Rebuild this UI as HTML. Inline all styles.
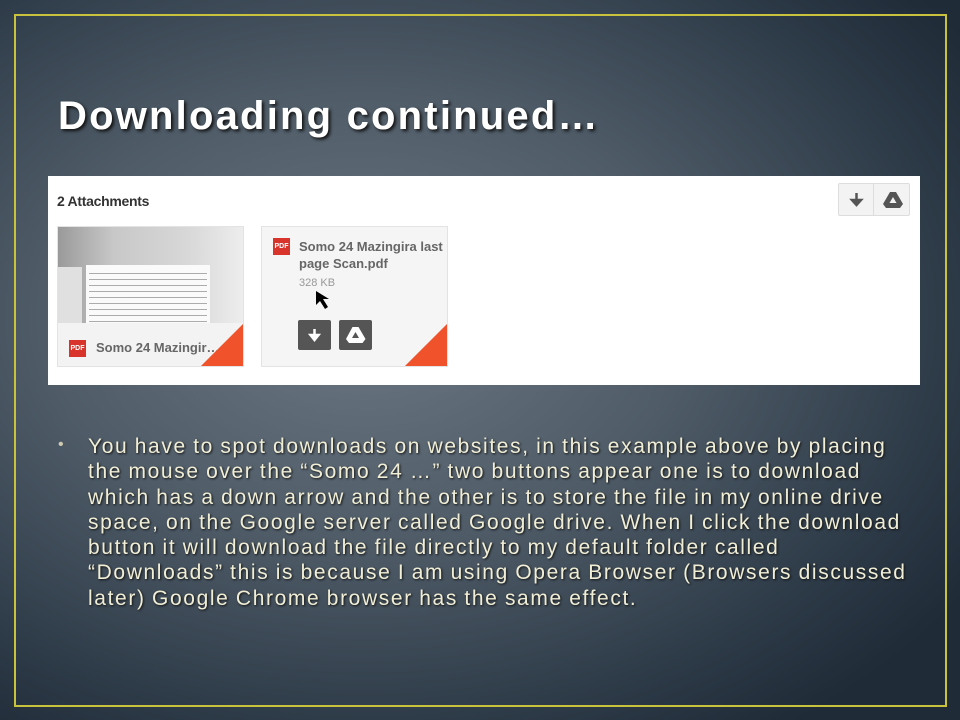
<!DOCTYPE html>
<html><head><meta charset="utf-8"><style>
*{margin:0;padding:0;box-sizing:border-box}
body{width:960px;height:720px;overflow:hidden;position:relative;font-family:"Liberation Sans",sans-serif;
background:radial-gradient(ellipse 75% 70% at 38% 44%,#6b7783 0%,#4f5c68 45%,#2e3b48 80%,#1f2b37 100%);}
.frame{position:absolute;left:14px;top:14px;width:933px;height:693px;border:2px solid #c9c23c}
h1{position:absolute;left:58px;top:94px;font-size:40px;font-weight:bold;color:#fff;letter-spacing:2.2px;text-shadow:2px 2px 3px #111;white-space:nowrap}
.panel{position:absolute;left:48px;top:176px;width:872px;height:209px;background:#fff}
.att{position:absolute;left:9px;top:17px;font-size:14px;font-weight:bold;color:#333;letter-spacing:-0.3px}
.tb{position:absolute;left:790px;top:7px;width:72px;height:33px;border:1px solid #ddd;background:#f3f3f3;border-radius:2px}
.tb div{position:absolute;top:0;width:35px;height:31px}
.card{position:absolute;top:50px;width:187px;height:141px;background:#f5f5f5;border:1px solid #e3e3e3;overflow:hidden}
.pdf{position:absolute;width:17px;height:17px;background:#d9342b;color:#fff;font-size:7px;font-weight:bold;text-align:center;line-height:17px}
.fold{position:absolute;right:0;bottom:0;width:0;height:0;border-left:21px solid transparent;border-top:21px solid transparent;border-right:21px solid #f0522c;border-bottom:21px solid #f0522c}
.fold2{position:absolute;right:21px;bottom:0;width:0;height:0;border-left:21px solid transparent;border-bottom:21px solid #c4c4c4}
.btn{position:absolute;top:93px;width:33px;height:30px;background:#555;border-radius:2px}
.body{position:absolute;left:88px;top:434px;font-size:21px;line-height:25.3px;color:#f1eed6;text-shadow:1px 1px 2px #111;white-space:nowrap;letter-spacing:1.62px;word-spacing:-1px}
.bul{position:absolute;left:58px;top:436px;color:#cfcab0;font-size:16px}
</style></head><body>
<div class="frame"></div>
<h1>Downloading continued…</h1>
<div class="panel">
 <div class="att">2 Attachments</div>
 <div class="tb">
  <div style="left:0;border-right:1px solid #ddd"><svg width="35" height="31"><path d="M17.5 9v9M13 16l4.5 5 4.5-5z" stroke="#555" stroke-width="2.5" fill="#555"/></svg></div>
  <div style="left:36px"><svg width="35" height="31"><path d="M15 8h6l7 12-3 4H11l-3-4z" fill="#555"/><path d="M18 13l-3.5 6h7z" fill="#f3f3f3"/></svg></div>
 </div>
 <div class="card" style="left:9px">
  <div style="position:absolute;left:0;top:0;width:187px;height:96px;background:linear-gradient(90deg,#9a9a9a,#c8c8c8 30%,#d8d8d8 70%,#eee)"></div>
  <div style="position:absolute;left:0;top:40px;width:24px;height:56px;background:#e0e0e0"></div>
  <div style="position:absolute;left:28px;top:38px;width:124px;height:58px;background:#fafafa;padding:5px 3px">
   <div style="height:58px;background:repeating-linear-gradient(#fafafa 0 3px,#777 3px 4px,#fafafa 4px 6px);opacity:.6"></div>
  </div>
  <div style="position:absolute;left:0;top:96px;width:187px;height:45px;background:#f3f3f3"></div>
  <div class="pdf" style="left:11px;top:113px">PDF</div>
  <div style="position:absolute;left:38px;top:113px;font-size:13px;font-weight:bold;color:#666">Somo 24 Mazingir…</div>
  <div class="fold2"></div><div class="fold"></div>
 </div>
 <div class="card" style="left:213px">
  <div class="pdf" style="left:11px;top:11px">PDF</div>
  <div style="position:absolute;left:37px;top:11px;font-size:13px;font-weight:bold;color:#666;line-height:17px">Somo 24 Mazingira last<br>page Scan.pdf</div>
  <div style="position:absolute;left:37px;top:50px;font-size:11px;color:#999">328 KB</div>
  <svg style="position:absolute;left:52px;top:62px" width="22" height="24"><path d="M2 2l0 14 4-4 5 8 3-2-5-8 6 0z" fill="#000"/></svg>
  <div class="btn" style="left:36px"><svg width="33" height="30"><path d="M16.5 9v8M12.5 15l4 5 4-5z" stroke="#fff" stroke-width="2.5" fill="#fff"/></svg></div>
  <div class="btn" style="left:77px"><svg width="33" height="30"><path d="M13.5 7h6l7 12-3 4H10l-3-4z" fill="#fff"/><path d="M16.5 12l-3.5 6h7z" fill="#555"/></svg></div>
  <div class="fold2"></div><div class="fold"></div>
 </div>
</div>
<div class="bul">•</div>
<div class="body">You have to spot downloads on websites, in this example above by placing<br>the mouse over the “Somo 24 …” two buttons appear one is to download<br>which has a down arrow and the other is to store the file in my online drive<br>space, on the Google server called Google drive. When I click the download<br>button it will download the file directly to my default folder called<br>“Downloads” this is because I am using Opera Browser (Browsers discussed<br>later) Google Chrome browser has the same effect.</div>
</body></html>
